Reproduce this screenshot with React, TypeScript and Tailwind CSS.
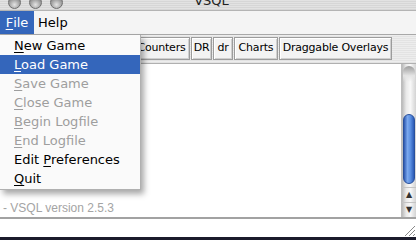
import React from 'react'

const menuItems = [
  { pre: '', key: 'N', rest: 'ew Game', enabled: true },
  { pre: '', key: 'L', rest: 'oad Game', enabled: true, active: true },
  { pre: '', key: 'S', rest: 'ave Game', enabled: false },
  { pre: '', key: 'C', rest: 'lose Game', enabled: false },
  { pre: '', key: 'B', rest: 'egin Logfile', enabled: false },
  { pre: '', key: 'E', rest: 'nd Logfile', enabled: false },
  { pre: 'Edit ', key: 'P', rest: 'references', enabled: true },
  { pre: '', key: 'Q', rest: 'uit', enabled: true },
]

const tabs = [
  { label: 'Counters', w: 'w-[57px]' },
  { label: 'DR', w: 'w-[21px]' },
  { label: 'dr', w: 'w-[20px]' },
  { label: 'Charts', w: 'w-[44px]' },
  { label: 'Draggable Overlays', w: 'w-[113px]' },
]

function TrafficLight() {
  return (
    <div className="w-[13px] h-[13px] -mt-[4px] rounded-full border border-[#6e6e6e] bg-[radial-gradient(circle_at_50%_70%,#e4e4e4,#9a9a9a_60%,#7a7a7a)]" />
  )
}

export default function App() {
  return (
    <div className="relative w-[416px] h-[240px] overflow-hidden flex flex-col bg-[#ececec] font-['DejaVu_Sans',sans-serif] text-black">
      {/* Title bar, top is cut off */}
      <div className="h-[11px] shrink-0 flex items-start relative bg-[repeating-linear-gradient(0deg,#d6d6d6_0px,#d6d6d6_1px,#e2e2e2_1px,#e2e2e2_2px)] border-b border-[#b4b4b4]">
        <div className="flex gap-[8px] pl-[8px]">
          <TrafficLight />
          <TrafficLight />
          <TrafficLight />
        </div>
        <div className="flex-1 flex justify-center pr-[56px] -mt-[7px] text-[13px] leading-[15px] text-[#222]">
          VSQL
        </div>
      </div>

      {/* Menu bar */}
      <div className="h-[24px] shrink-0 flex items-stretch bg-[#f4f4f4] border-b border-[#a8a8a8] text-[13px]">
        <div className="w-[34px] flex items-center justify-center bg-[#3466bb] text-white">
          <span className="underline underline-offset-2 decoration-1">F</span>ile
        </div>
        <div className="flex items-center pl-[4px]">Help</div>
      </div>

      {/* Toolbar */}
      <div className="h-[28px] shrink-0 flex items-start justify-end pr-[24px] pt-[2px] gap-[1px] bg-[repeating-linear-gradient(0deg,#e3e3e3_0px,#e3e3e3_1px,#ededed_1px,#ededed_2px)] text-[11px] tracking-[-0.2px]">
        {tabs.map((t) => (
          <div
            key={t.label}
            className={`${t.w} h-[23px] flex items-center justify-center border border-[#9c9c9c] bg-[#f3f3f3] shadow-[inset_1px_1px_0_#ffffff,inset_-1px_-1px_0_#cfcfcf]`}
          >
            {t.label}
          </div>
        ))}
      </div>

      {/* Log area + scrollbar */}
      <div className="flex-1 flex border-t border-[#b0b0b0] min-h-0">
        <div className="flex-1 bg-white flex flex-col justify-end pl-[3px] pb-[2px]">
          <div className="font-['Liberation_Sans',sans-serif] text-[12px] leading-[14px] text-[#a4a4a4]">
            - VSQL version 2.5.3
          </div>
        </div>
        <div className="w-[15px] flex flex-col border-l border-[#bdbdbd] bg-[linear-gradient(90deg,#b9b9b9,#e9e9e9_30%,#f8f8f8_60%,#d3d3d3)]">
          <div className="h-[50px] pt-[2px] px-[1px]">
            <div className="h-[16px] rounded-t-full bg-[linear-gradient(180deg,#9c9c9c,#e4e4e4_60%,transparent)]" />
          </div>
          <div className="flex-1 px-[1px]">
            <div className="h-[70px] rounded-full border border-[#28509c] bg-[linear-gradient(90deg,#2d58b0,#7aa8ee_35%,#5a8ee0_65%,#2a5ab6)]" />
          </div>
          <div className="h-[15px] flex items-center justify-center border-t border-[#c4c4c4] text-[8px] text-[#333]">
            ▲
          </div>
          <div className="h-[15px] flex items-center justify-center border-t border-[#c4c4c4] text-[8px] text-[#333]">
            ▼
          </div>
        </div>
      </div>

      {/* Input line */}
      <div className="h-[20px] shrink-0 flex border-t-2 border-[#a2a2a2] bg-white">
        <div className="flex-1" />
        <div className="w-[13px] self-end h-[14px]">
          <svg width="13" height="14" viewBox="0 0 13 14">
            <path d="M2 13 L12 3 M6 13 L12 7 M10 13 L12 11" stroke="#8a8a8a" strokeWidth="1" />
          </svg>
        </div>
      </div>
      <div className="h-[3px] shrink-0 bg-[#1b1b2b]" />

      {/* File menu */}
      <div className="absolute top-[35px] left-0 w-[141px] pt-[1px] pb-[1px] bg-[#fafafa] border-r border-b border-[#b0b0b0] shadow-[3px_4px_6px_rgba(0,0,0,0.35)] text-[13px]">
        {menuItems.map((m) => (
          <div
            key={m.key}
            className={`h-[19px] leading-[19px] pl-[14px] whitespace-nowrap ${
              m.active ? 'bg-[#3466bb] text-white' : m.enabled ? 'text-black' : 'text-[#9e9e9e]'
            }`}
          >
            {m.pre}
            <span className="underline underline-offset-2 decoration-1">{m.key}</span>
            {m.rest}
          </div>
        ))}
      </div>
    </div>
  )
}
